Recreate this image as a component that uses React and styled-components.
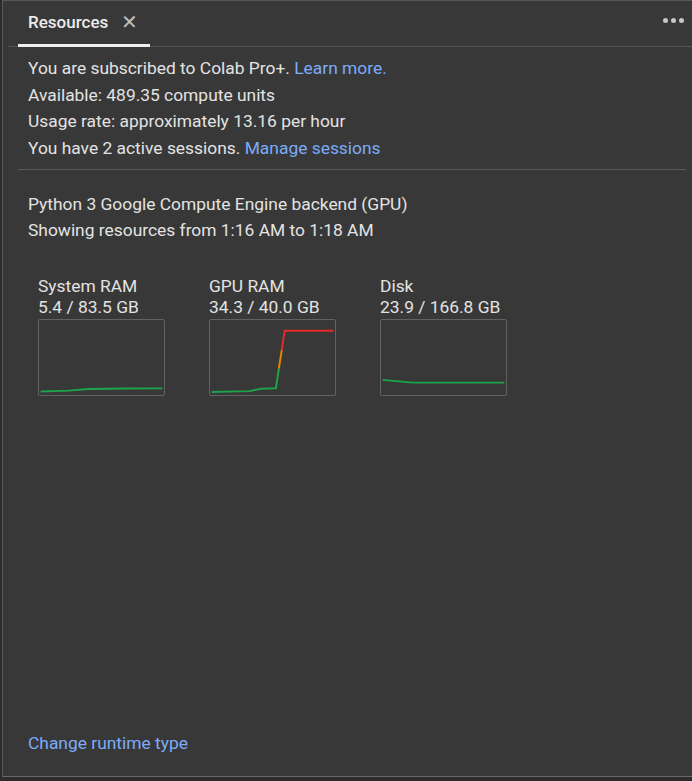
import styled, { createGlobalStyle } from 'styled-components'

const Global = createGlobalStyle`
	html, body {
		margin: 0;
		padding: 0;
		background: #2c2c2c;
	}
	body {
		font-family: Roboto, "Noto Sans", Arial, sans-serif;
	}
`

const Frame = styled.div`
	width: 692px;
	height: 781px;
	box-sizing: border-box;
	padding: 0 0 4px 2px;
	background: #2c2c2c;
`

const Panel = styled.div`
	height: 100%;
	box-sizing: border-box;
	border-top: 1px solid #575757;
	border-left: 1px solid #5a5a5a;
	border-bottom: 1px solid #6a6a6a;
	background: #383838;
	display: flex;
	flex-direction: column;
	color: #e3e3e3;
`

const TabBar = styled.header`
	height: 45px;
	margin-left: 5px;
	display: flex;
	align-items: stretch;
	justify-content: space-between;
	border-bottom: 1px solid #555555;
`

const Tab = styled.div`
	margin-left: 10px;
	width: 132px;
	box-sizing: border-box;
	padding: 0 0 2px 10px;
	display: flex;
	align-items: center;
	gap: 13px;
	border-bottom: 3px solid #f1f1f1;
	margin-bottom: -1px;
	font-size: 17px;
	font-weight: 500;
	color: #ececec;
`

const Close = styled.span`
	font-size: 20px;
	font-weight: 300;
	color: #bdbdbd;
	line-height: 1;
`

const Dots = styled.div`
	display: flex;
	align-items: center;
	gap: 3px;
	padding: 0 8px 6px 0;

	span {
		width: 5px;
		height: 5px;
		border-radius: 50%;
		background: #c6c6c6;
	}
`

const Body = styled.div`
	flex: 1;
	display: flex;
	flex-direction: column;
	padding: 0 6px 0 15px;
	font-size: 17.4px;
`

const Section = styled.section`
	padding: ${p => p.$pad};
	line-height: ${p => p.$lh || '26.67px'};
	border-bottom: ${p => (p.$divider ? '1px solid #5a5a5a' : 'none')};

	p {
		margin: 0;
		padding-left: 10px;
	}
`

const Link = styled.a`
	color: #7cacf8;
	text-decoration: none;
	cursor: pointer;
`

const Charts = styled.div`
	display: flex;
	gap: 44px;
	padding: 32px 0 0 20px;
`

const Chart = styled.figure`
	margin: 0;
	width: 127px;
	line-height: 21px;
	color: #e3e3e3;
	white-space: nowrap;

	svg {
		display: block;
		margin-top: 1px;
		border: 1px solid #626262;
		border-radius: 2px;
		box-sizing: border-box;
	}
`

const Footer = styled.div`
	margin-top: auto;
	padding: 0 0 23px 10px;
`

const GREEN = '#1ea44a'

function MiniChart({ label, value, children }) {
	return (
		<Chart>
			<div>{label}</div>
			<div>{value}</div>
			<svg width="127" height="77" viewBox="0 0 127 77">
				{children}
			</svg>
		</Chart>
	)
}

export default function App() {
	return (
		<>
			<Global />
			<Frame>
				<Panel>
					<TabBar>
						<Tab>
							Resources <Close>✕</Close>
						</Tab>
						<Dots>
							<span />
							<span />
							<span />
						</Dots>
					</TabBar>
					<Body>
						<Section $pad="8px 0 7px" $divider>
							<p>
								You are subscribed to Colab Pro+. <Link>Learn more.</Link>
							</p>
							<p>Available: 489.35 compute units</p>
							<p>Usage rate: approximately 13.16 per hour</p>
							<p>
								You have 2 active sessions. <Link>Manage sessions</Link>
							</p>
						</Section>
						<Section $pad="21px 0 0" $lh="26.5px">
							<p>Python 3 Google Compute Engine backend (GPU)</p>
							<p>Showing resources from 1:16 AM to 1:18 AM</p>
						</Section>
						<Charts>
							<MiniChart label="System RAM" value="5.4 / 83.5 GB">
								<polyline
									points="1,73.5 30,72.5 50,70.8 90,70.3 126,70.2"
									fill="none"
									stroke={GREEN}
									strokeWidth="2"
								/>
							</MiniChart>
							<MiniChart label="GPU RAM" value="34.3 / 40.0 GB">
								<polyline
									points="1,74 40,73 52,70.5 67,70 70,50"
									fill="none"
									stroke={GREEN}
									strokeWidth="2"
								/>
								<polyline points="70,50 73,31" fill="none" stroke="#e08a00" strokeWidth="2" />
								<polyline points="73,31 76,11 126,11" fill="none" stroke="#e52b2b" strokeWidth="2" />
							</MiniChart>
							<MiniChart label="Disk" value="23.9 / 166.8 GB">
								<polyline
									points="1,61.5 32,64.3 126,64.3"
									fill="none"
									stroke={GREEN}
									strokeWidth="2"
								/>
							</MiniChart>
						</Charts>
						<Footer>
							<Link>Change runtime type</Link>
						</Footer>
					</Body>
				</Panel>
			</Frame>
		</>
	)
}
